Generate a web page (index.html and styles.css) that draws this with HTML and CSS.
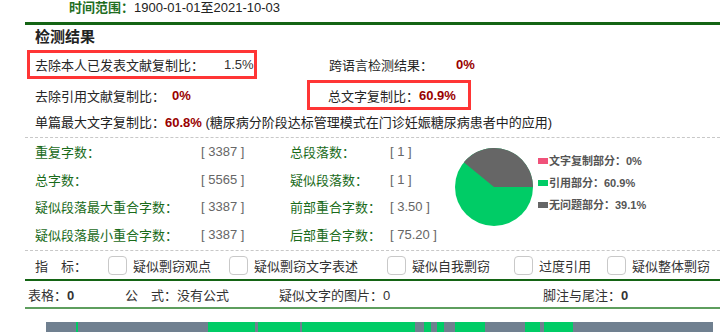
FILE: index.html
```html
<!DOCTYPE html>
<html lang="zh-CN">
<head>
<meta charset="utf-8">
<title>检测结果</title>
<link rel="stylesheet" href="styles.css">
</head>
<body>
<div class="page">
  <div class="range"><span class="range-label">时间范围：</span>1900-01-01至2021-10-03</div>
  <div class="result">
    <div class="title">检测结果</div>
    <div class="summary">
      <div class="cell box box-a"><span class="lab lab-a">去除本人已发表文献复制比：</span><span class="plain">1.5%</span></div>
      <div class="cell cross"><span class="lab lab-b">跨语言检测结果：</span><span class="val">0%</span></div>
      <div class="cell quote"><span class="lab">去除引用文献复制比：</span><span class="val val-gap">0%</span></div>
      <div class="cell box box-b"><span class="lab">总文字复制比：</span><span class="val">60.9%</span></div>
    </div>
    <div class="single">单篇最大文字复制比：<span class="val">60.8%</span> (糖尿病分阶段达标管理模式在门诊妊娠糖尿病患者中的应用)</div>
    <div class="stats">
      <div class="stat-grid">
        <span class="sl">重复字数：</span><span class="sv">[ 3387 ]</span><span class="sl">总段落数：</span><span class="sv">[ 1 ]</span>
        <span class="sl">总字数：</span><span class="sv">[ 5565 ]</span><span class="sl">疑似段落数：</span><span class="sv">[ 1 ]</span>
        <span class="sl">疑似段落最大重合字数：</span><span class="sv">[ 3387 ]</span><span class="sl">前部重合字数：</span><span class="sv">[ 3.50 ]</span>
        <span class="sl">疑似段落最小重合字数：</span><span class="sv">[ 3387 ]</span><span class="sl">后部重合字数：</span><span class="sv">[ 75.20 ]</span>
      </div>
      <div class="chart">
        <svg class="pie" width="80" height="80" viewBox="0 0 80 80">
          <circle cx="40" cy="40" r="39" fill="#00cc66"/>
          <path d="M40 40 L79 40 A39 39 0 0 0 9.78 15.35 Z" fill="#666666"/>
        </svg>
        <div class="legend">
          <div class="li"><span class="sw sw-pink"></span>文字复制部分：0%</div>
          <div class="li"><span class="sw sw-green"></span>引用部分：60.9%</div>
          <div class="li"><span class="sw sw-grey"></span>无问题部分：39.1%</div>
        </div>
      </div>
    </div>
    <div class="indicators">
      <span class="ind-label">指　标：</span>
      <span class="opt"><span class="chk"></span>疑似剽窃观点</span>
      <span class="opt"><span class="chk"></span>疑似剽窃文字表述</span>
      <span class="opt"><span class="chk"></span>疑似自我剽窃</span>
      <span class="opt"><span class="chk"></span>过度引用</span>
      <span class="opt"><span class="chk"></span>疑似整体剽窃</span>
    </div>
    <div class="info">
      <span class="ic ic1">表格：<b>0</b></span>
      <span class="ic ic2">公　式：没有公式</span>
      <span class="ic ic3">疑似文字的图片：0</span>
      <span class="ic ic4">脚注与尾注：<b>0</b></span>
    </div>
  </div>
  <div class="bar">
    <span class="s" style="width:30px"></span><span class="g" style="width:2px"></span><span class="s" style="width:130px"></span><span class="g" style="width:47px"></span><span class="s" style="width:3px"></span><span class="g" style="width:42px"></span><span class="s" style="width:2px"></span><span class="g" style="width:113px"></span><span class="s" style="width:9px"></span><span class="g" style="width:7px"></span><span class="s" style="width:6px"></span><span class="g" style="width:7px"></span><span class="s" style="width:11px"></span><span class="g" style="width:30px"></span><span class="s" style="width:40px"></span><span class="g" style="width:15px"></span><span class="s" style="width:4px"></span><span class="g" style="width:29px"></span><span class="s" style="width:140px"></span>
  </div>
</div>
</body>
</html>
```
FILE: styles.css
```css
html, body {
  margin: 0;
  padding: 0;
  background: #ffffff;
}
body {
  font-family: "Liberation Sans", "Noto Sans CJK SC", sans-serif;
  font-size: 13px;
  color: #262626;
  overflow: hidden;
}
.page {
  width: 720px;
  height: 332px;
  overflow: hidden;
}
.range {
  height: 22px;
  line-height: 16px;
  padding-left: 69px;
  color: #222;
  white-space: nowrap;
}
.range-label {
  color: #1f6e1f;
  font-weight: bold;
}
.result {
  margin-left: 25px;
  border-top: 3px solid #146414;
}
.title {
  line-height: 24px;
  height: 24px;
  padding-left: 10px;
  font-size: 15px;
  font-weight: bold;
  color: #222;
}
.summary {
  margin-top: 1px;
  margin-left: 2px;
  display: grid;
  grid-template-columns: 280px auto;
  grid-template-rows: 29px 30px;
  row-gap: 1px;
}
.cell {
  display: flex;
  align-items: center;
  white-space: nowrap;
  box-sizing: border-box;
}
.box {
  border: 3px solid #ff3535;
}
.box-a {
  width: 230px;
  padding-left: 5px;
}
.lab-a {
  width: 189px;
}
.plain {
  color: #333;
}
.cross {
  padding-left: 22px;
}
.lab-b {
  width: 127px;
}
.quote {
  padding-left: 8px;
}
.val-gap {
  margin-left: 7px;
}
.box-b {
  width: 164px;
  padding-left: 18px;
}
.val {
  color: #990000;
  font-weight: bold;
}
.single {
  margin-top: 1px;
  line-height: 24px;
  height: 24px;
  padding-left: 10px;
  white-space: nowrap;
  color: #222;
}
.stats {
  margin-top: 2px;
  border-top: 1px dashed #c8c8c8;
  border-bottom: 1px dashed #c8c8c8;
  padding-bottom: 2px;
  padding-left: 10px;
  display: flex;
}
.stat-grid {
  display: grid;
  grid-template-columns: 166px 89px 100px 64px;
  grid-auto-rows: 27.5px;
  align-items: center;
  white-space: nowrap;
}
.sl {
  color: #1a6b1a;
}
.sv {
  color: #666666;
}
.chart {
  display: flex;
  align-items: flex-start;
}
.pie {
  display: block;
  margin-top: 9px;
}
.legend {
  margin-left: 4px;
  margin-top: 12px;
  font-size: 11px;
  font-weight: bold;
  color: #555;
}
.li {
  height: 22px;
  line-height: 22px;
  display: flex;
  align-items: center;
  white-space: nowrap;
}
.sw {
  display: inline-block;
  width: 10px;
  height: 6px;
  margin-right: 1px;
}
.sw-pink { background: #f0527a; }
.sw-green { background: #00cc66; }
.sw-grey { background: #666666; }
.indicators {
  height: 28px;
  display: flex;
  align-items: center;
  padding-left: 10px;
  white-space: nowrap;
  color: #333;
}
.ind-label {
  width: 73px;
}
.opt {
  display: flex;
  align-items: center;
}
.opt:nth-of-type(2) { margin-right: 18px; }
.opt:nth-of-type(3) { margin-right: 29px; }
.opt:nth-of-type(4) { margin-right: 24px; }
.opt:nth-of-type(5) { margin-right: 16px; }
.chk {
  display: inline-block;
  width: 17px;
  height: 17px;
  border: 1px solid #c9c9c9;
  border-radius: 4px;
  margin-right: 6px;
  box-sizing: content-box;
}
.info {
  border-top: 2px solid #146414;
  border-bottom: 2px solid #5e9e5e;
  height: 26px;
  display: flex;
  align-items: center;
  padding-left: 3px;
  white-space: nowrap;
  color: #333;
}
.ic1 { width: 97px; }
.ic2 { width: 154px; }
.ic3 { width: 264px; }
.info b {
  font-weight: bold;
}
.bar {
  margin-top: 13px;
  margin-left: 46px;
  width: 667px;
  height: 12px;
  display: flex;
}
.bar .s { background: #708090; height: 100%; }
.bar .g { background: #00cc66; height: 100%; }
```
